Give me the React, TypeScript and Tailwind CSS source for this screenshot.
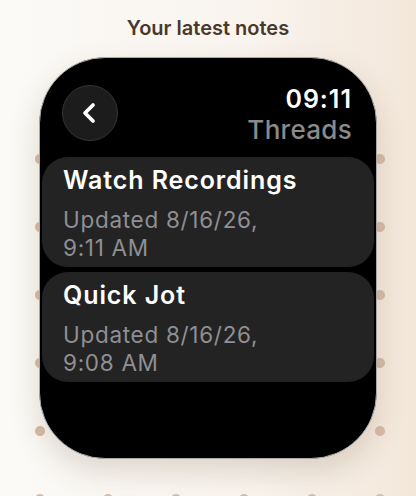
import React from "react";
import { ChevronLeft } from "lucide-react";

interface Note {
  id: number;
  title: string;
  date: string;
  time: string;
}

const notes: Note[] = [
  { id: 1, title: "Watch Recordings", date: "Updated 8/16/26,", time: "9:11 AM" },
  { id: 2, title: "Quick Jot", date: "Updated 8/16/26,", time: "9:08 AM" },
];

function NoteCard({ note }: { note: Note }) {
  return (
    <button className="w-full text-left bg-[#232323] rounded-[26px] pl-[21px] pr-4 pt-[8px] pb-[5px]">
      <h2 className="text-[25px] leading-[30px] font-semibold text-white tracking-[0.9px]">{note.title}</h2>
      <p className="mt-[11px] text-[22.5px] leading-[28px] text-[#8f8f94] tracking-[0.7px]">
        <span className="block">{note.date}</span>
        <span className="block">{note.time}</span>
      </p>
    </button>
  );
}

export default function App() {
  return (
    <div
      className="relative w-[416px] h-[496px] overflow-hidden bg-[linear-gradient(90deg,#fbfaf7_0%,#f9f4ee_60%,#f3e7da_100%)]"
      style={{ fontFamily: "Inter, 'Noto Sans', sans-serif" }}
    >
      {/* dotted backdrop */}
      <div className="absolute left-[6px] top-[125px] right-0 bottom-0 bg-[radial-gradient(circle,#d8bca6_4.5px,transparent_5.5px)] bg-[length:68px_68px]" />

      <div className="relative flex flex-col items-center">
        <h1 className="pt-4 text-[20px] leading-[24px] font-semibold text-[#4a382c]">Your latest notes</h1>

        {/* watch */}
        <div className="mt-[17px] w-[338px] h-[402px] rounded-[66px] border border-[#a9a9a9] bg-black shadow-[0_12px_30px_rgba(90,60,30,0.18)] overflow-hidden">
          <div className="flex justify-between pl-[22px] pr-[24px] pt-[26px]">
            <button className="mt-[1px] w-[56px] h-[56px] rounded-full bg-[#1c1c1c] border border-[#363636] flex items-center justify-center">
              <ChevronLeft size={32} strokeWidth={2.8} className="text-white -ml-[2px]" />
            </button>
            <div className="flex flex-col items-end">
              <span className="text-[25px] leading-[30px] font-semibold text-white tracking-[1px]">09:11</span>
              <span className="mt-[1px] text-[26px] leading-[30px] font-medium text-[#8a8a8a] tracking-[0.3px]">Threads</span>
            </div>
          </div>

          <div className="mt-[12px] px-[2px] flex flex-col gap-[5px]">
            {notes.map((note) => (
              <NoteCard key={note.id} note={note} />
            ))}
          </div>
        </div>
      </div>
    </div>
  );
}
